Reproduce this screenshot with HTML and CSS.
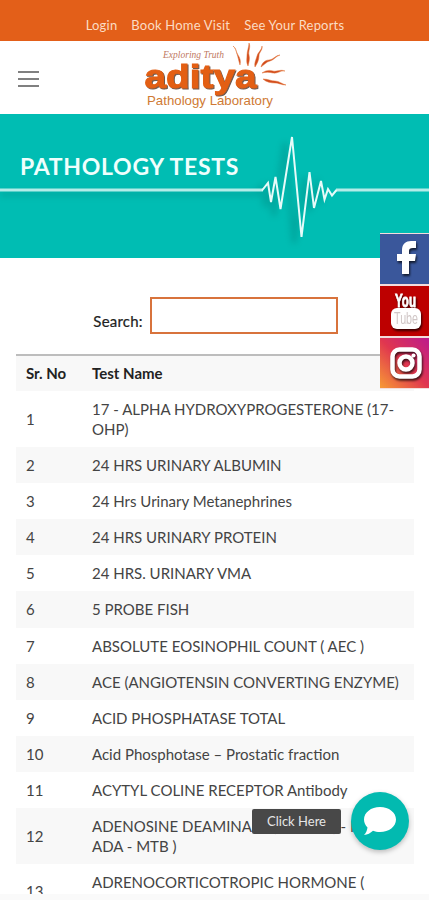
FILE: index.html
```html
<!DOCTYPE html>
<html lang="en">
<head>
  <meta charset="utf-8">
  <meta name="viewport" content="width=device-width, initial-scale=1">
  <title>Pathology Tests - Aditya Pathology Laboratory</title>
  <link rel="stylesheet" href="styles.css">
</head>
<body>

<div class="page">
  <nav class="top-bar">
    <a>Login</a>
    <a>Book Home Visit</a>
    <a>See Your Reports</a>
  </nav>

  <header class="header">
    <div class="menu-icon"><span></span><span></span><span></span></div>
    <svg class="logo" width="150" height="72" viewBox="140 41 150 72">
      <text class="logo-tag" x="163" y="56.500" textLength="61">Exploring Truth</text>
      <text class="logo-name" x="144.500" y="86.500" textLength="112" lengthAdjust="spacingAndGlyphs">aditya</text>
      <text class="logo-sub" x="147" y="104" textLength="126" lengthAdjust="spacingAndGlyphs">Pathology Laboratory</text>
      <!-- sun rays -->
      <g class="rays">
        <path d="M233 45c3 2 3 5 4 8s2 8 3 11c1-4 0-7-2-10s-2-7-5-9z"/>
        <path d="M249 42c2 4-1 8 0 12s0 7-1 11c-2-4-1-7-1-11s2-8 2-12z"/>
        <path d="M262 45c1 4-3 6-3 10s-2 8-4 11c-1-4 1-7 2-11s5-6 5-10z"/>
        <path d="M280 54c-4 1-6 5-10 6s-6 4-9 6c1-4 4-7 8-7s7-5 11-5z"/>
        <path d="M285 70c-4-1-8 3-12 2s-7-1-11 0c4-3 8-3 11-2s8-2 12 0z"/>
        <path d="M286 84c-5 0-7-2-11-2s-9-1-12-4c5 0 8 2 12 2s7 3 11 4z"/>
      </g>
    </svg>
  </header>

  <section class="banner">
    <h1>PATHOLOGY TESTS</h1>
    <svg class="pulse" width="429" height="144" viewBox="0 114 429 144">
      <defs>
        <filter id="soft" x="-10%" y="-20%" width="120%" height="140%"><feGaussianBlur stdDeviation="3"/></filter>
      </defs>
      <path class="pulse-shadow" filter="url(#soft)" d="M0 194H256L261 188 266 207 269 183 274 216 285 143 294 243 305 177 309 211 317 185 321 203"/>
      <path class="pulse-flat" d="M0 190H263M336 190H429"/>
      <path class="pulse-line" d="M262 190.500L268 183 271 202 275.500 177 280.500 209 292 137 301.500 237 309.500 172 314 208 321 181 324.500 199.500 328 189 332 195.500 336.500 190"/>
    </svg>
  </section>

  <main class="content">
    <label class="search"><span>Search:</span> <input type="text"></label>

    <table class="tests">
      <thead>
        <tr><th>Sr. No</th><th>Test Name</th></tr>
      </thead>
      <tbody>
        <tr><td>1</td><td>17 - ALPHA HYDROXYPROGESTERONE (17-<br>OHP)</td></tr>
        <tr><td>2</td><td>24 HRS URINARY ALBUMIN</td></tr>
        <tr><td>3</td><td>24 Hrs Urinary Metanephrines</td></tr>
        <tr><td>4</td><td>24 HRS URINARY PROTEIN</td></tr>
        <tr><td>5</td><td>24 HRS. URINARY VMA</td></tr>
        <tr><td>6</td><td>5 PROBE FISH</td></tr>
        <tr><td>7</td><td>ABSOLUTE EOSINOPHIL COUNT ( AEC )</td></tr>
        <tr><td>8</td><td>ACE (ANGIOTENSIN CONVERTING ENZYME)</td></tr>
        <tr><td>9</td><td>ACID PHOSPHATASE TOTAL</td></tr>
        <tr><td>10</td><td>Acid Phosphotase – Prostatic fraction</td></tr>
        <tr><td>11</td><td>ACYTYL COLINE RECEPTOR Antibody</td></tr>
        <tr><td>12</td><td>ADENOSINE DEAMINASE (ADA,TB ) - M<br>ADA - MTB )</td></tr>
        <tr><td>13</td><td>ADRENOCORTICOTROPIC HORMONE (<br>ACTH )</td></tr>
      </tbody>
    </table>
  </main>
</div>

<!-- social links -->
<div class="social">
  <a class="facebook">
    <svg width="49" height="50" viewBox="0 0 49 50"><path d="M22 40V27h-5v-7h5v-4c0-6 4-9 9-9h5v7h-3c-3 0-4 1-4 3v3h7l-1 7h-6v13z"/></svg>
  </a>
  <a class="youtube">
    <svg width="49" height="50" viewBox="0 0 49 50">
      <rect x="11" y="22" width="30" height="21" rx="6"/>
      <text class="yt-you" x="15" y="21" textLength="21" lengthAdjust="spacingAndGlyphs">You</text>
      <text class="yt-tube" x="14" y="38" textLength="24" lengthAdjust="spacingAndGlyphs">Tube</text>
    </svg>
  </a>
  <a class="instagram">
    <svg width="49" height="50" viewBox="0 0 49 50">
      <rect class="ring" x="12.500" y="11.500" width="27" height="27" rx="7"/>
      <circle class="ring" cx="26" cy="25" r="6.500"/>
      <circle cx="33.500" cy="17.500" r="2"/>
    </svg>
  </a>
</div>

<div class="chat">
  <span class="chat-tip">Click Here</span>
  <div class="chat-button">
    <svg width="34" height="30" viewBox="0 0 34 30"><path d="M17 1c9 0 16 5.500 16 12.500S26 26 17 26c-2.600 0-5-.4-7-1.200C7.500 27 4.500 29 1 29c2-2 3-4.500 3.500-7.500C2.300 19.300 1 16.600 1 13.500 1 6.500 8 1 17 1z"/></svg>
  </div>
</div>

<div class="bottom-edge"></div>

</body>
</html>
```
FILE: styles.css
```css
* {
  box-sizing: border-box;
}

body {
  margin: 0;
  background-color: #fff;
  font-family: Lato, sans-serif;
  font-size: 15px;
  color: #444;
  overflow: hidden;
}

.page {
  height: 900px;
  overflow: hidden;
}

.top-bar {
  display: flex;
  justify-content: center;
  gap: 14px;
  height: 41px;
  padding: 16px 0 0 1px;
  background-color: #e35f19;
  color: #fbdcc4;
  font-size: 13px;
  line-height: 18px;
  letter-spacing: 0.2px;
}

.header {
  display: flex;
  align-items: center;
  height: 73px;
  padding-left: 18px;
}

.menu-icon {
  display: flex;
  flex-direction: column;
  gap: 5px;
  width: 21px;
  margin: 2px 101px 0 0;
}

.menu-icon span {
  height: 2px;
  background-color: #808080;
}

.logo-tag {
  font: italic 9.5px "Liberation Serif", serif;
  fill: #c0785f;
}

.logo-name {
  font: bold 34px "Liberation Sans", sans-serif;
  fill: #e35f14;
  stroke: #e35f14;
  stroke-width: 1px;
  filter: drop-shadow(1px 1px 0 #6d5a50);
}

.logo-sub {
  font: 13px "Liberation Sans", sans-serif;
  fill: #cf7a34;
}

.rays {
  fill: #d24a1c;
  stroke: #e2763a;
  stroke-width: 0.5px;
}

.banner {
  display: grid;
  height: 144px;
  background-color: #00bdb3;
}

.banner h1,
.pulse {
  grid-area: 1 / 1;
}

.banner h1 {
  margin: 0;
  padding: 37px 0 0 20px;
  color: #effffd;
  font-size: 23px;
  line-height: 30px;
  font-weight: bold;
  letter-spacing: 0.7px;
}

.pulse path {
  fill: none;
}

.pulse .pulse-shadow {
  stroke: #008f88;
  stroke-width: 5px;
  opacity: 0.45;
}

.pulse-flat {
  stroke: #b4ece8;
  stroke-width: 3px;
}

.pulse-line {
  stroke: #e6fbf9;
  stroke-width: 2px;
}

.content {
  padding: 39px 15px 0 16px;
}

.search {
  display: flex;
  align-items: flex-start;
  justify-content: center;
  gap: 7px;
  height: 38px;
  color: #222;
}

.search span {
  padding: 15px 0 0 1px;
  line-height: 19px;
  letter-spacing: 0.2px;
  -webkit-text-stroke: 0.2px;
}

.search input {
  width: 188px;
  height: 37px;
  margin: 0;
  border: 2px solid #d8733c;
  background-color: #fff;
}

.tests {
  width: 398px;
  margin-top: 19px;
  border-collapse: separate;
  border-spacing: 0;
  border-top: 2px solid #bdbdbd;
  line-height: 19.3px;
}

.tests th,
.tests td {
  padding: 9px 0 7.87px 10px;
  text-align: left;
}

.tests th {
  padding-top: 8px;
  padding-bottom: 8px;
  color: #222;
  font-weight: bold;
}

.tests th:first-child,
.tests td:first-child {
  width: 66px;
}

.tests thead tr,
.tests tbody tr:nth-child(even) {
  background-color: #f8f8f8;
}

.social {
  position: fixed;
  top: 233px;
  right: 0;
  display: flex;
  flex-direction: column;
  gap: 2px;
  padding: 1px 0;
  background-color: #f3dcdc;
}

.social a,
.social svg {
  display: block;
}

.social svg {
  fill: #fff;
  filter: drop-shadow(1px 2px 1px rgba(0, 0, 0, 0.7));
}

.facebook {
  background-color: #3a579b;
}

.youtube {
  background-color: #bd0000;
}

.instagram {
  background: linear-gradient(45deg, #f79a35, #e0364f 50%, #bc1b8d);
}

.yt-you {
  font: bold 18px "Liberation Sans", sans-serif;
  stroke: #fff;
  stroke-width: 0.8px;
}

.yt-tube {
  font: 16px "Liberation Sans", sans-serif;
  fill: #d0c6c6;
}

.ring {
  fill: none;
  stroke: #fff;
  stroke-width: 4.5px;
}

.chat {
  position: fixed;
  top: 792px;
  right: 20px;
  display: flex;
  align-items: center;
  gap: 10px;
}

.chat-tip {
  width: 89px;
  height: 25px;
  border-radius: 2px;
  background-color: #484848;
  color: #e6e6e6;
  font-size: 13px;
  line-height: 25px;
  text-align: center;
}

.chat-button {
  display: flex;
  align-items: center;
  justify-content: center;
  width: 58px;
  height: 58px;
  border-radius: 50%;
  background-color: #02bab0;
  box-shadow: 0 2px 5px rgba(0, 0, 0, 0.25);
}

.chat-button svg {
  fill: #fff;
}

.bottom-edge {
  position: fixed;
  bottom: 0;
  left: 0;
  right: 0;
  height: 6px;
  background-color: #fafafa;
}
```
